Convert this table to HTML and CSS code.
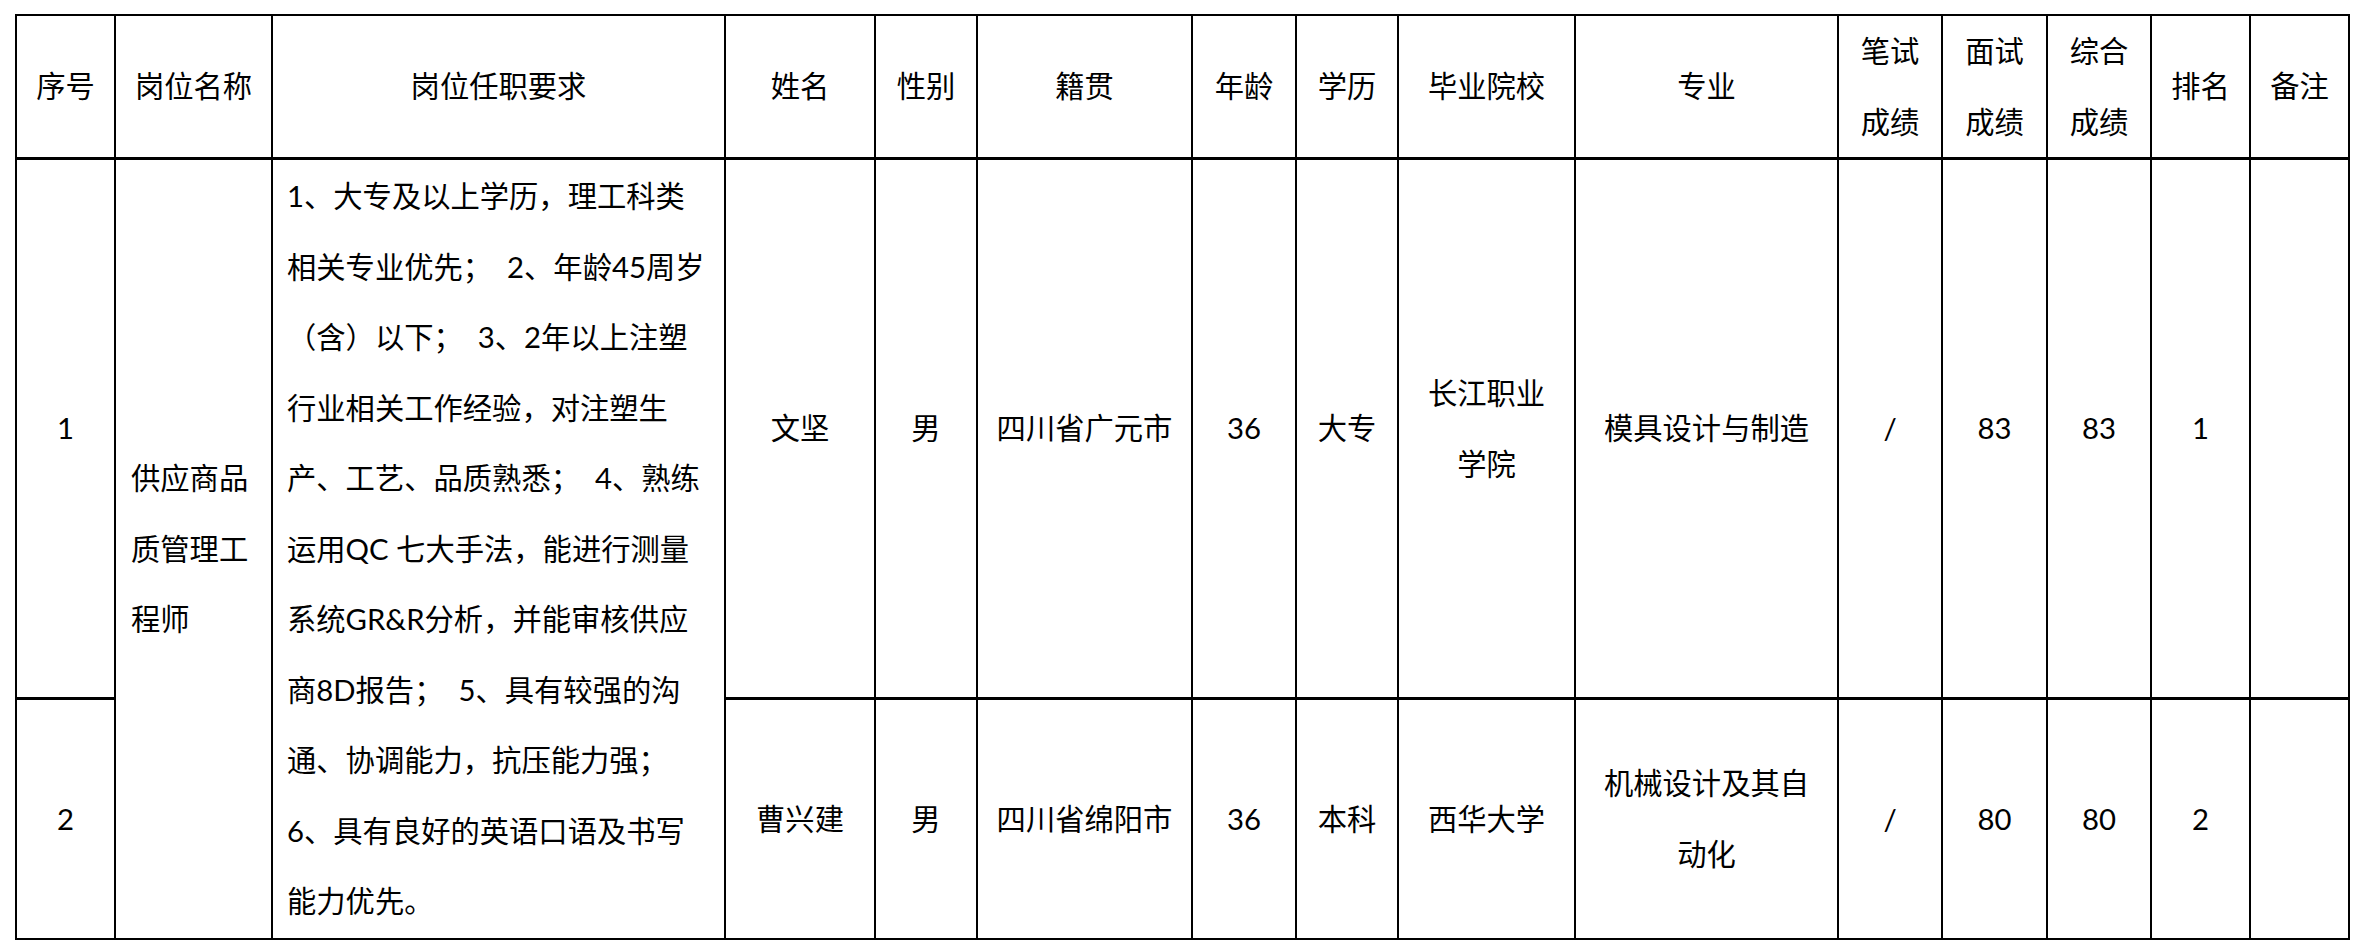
FILE: index.html
```html
<!DOCTYPE html>
<html lang="zh-CN">
<head>
<meta charset="utf-8">
<title>招聘成绩表</title>
<link rel="stylesheet" href="styles.css">
</head>
<body>
<table class="grid">
  <colgroup>
    <col class="c1"><col class="c2"><col class="c3"><col class="c4"><col class="c5">
    <col class="c6"><col class="c7"><col class="c8"><col class="c9"><col class="c10">
    <col class="c11"><col class="c12"><col class="c13"><col class="c14"><col class="c15">
  </colgroup>
  <thead>
    <tr class="head">
      <th>序号</th>
      <th>岗位名称</th>
      <th>岗位任职要求</th>
      <th>姓名</th>
      <th>性别</th>
      <th>籍贯</th>
      <th>年龄</th>
      <th>学历</th>
      <th>毕业院校</th>
      <th>专业</th>
      <th>笔试<br>成绩</th>
      <th>面试<br>成绩</th>
      <th>综合<br>成绩</th>
      <th>排名</th>
      <th>备注</th>
    </tr>
  </thead>
  <tbody>
    <tr class="row1">
      <td>1</td>
      <td rowspan="2" class="left">供应商品<br>质管理工<br>程师</td>
      <td rowspan="2" class="left req">1、大专及以上学历，理工科类<br>相关专业优先；&nbsp; 2、年龄45周岁<br>（含）以下；&nbsp; 3、2年以上注塑<br>行业相关工作经验，对注塑生<br>产、工艺、品质熟悉；&nbsp; 4、熟练<br>运用QC 七大手法，能进行测量<br>系统GR&amp;R分析，并能审核供应<br>商8D报告；&nbsp; 5、具有较强的沟<br>通、协调能力，抗压能力强；<br>6、具有良好的英语口语及书写<br>能力优先。</td>
      <td>文坚</td>
      <td>男</td>
      <td>四川省广元市</td>
      <td>36</td>
      <td>大专</td>
      <td>长江职业<br>学院</td>
      <td>模具设计与制造</td>
      <td>/</td>
      <td>83</td>
      <td>83</td>
      <td>1</td>
      <td></td>
    </tr>
    <tr class="row2">
      <td>2</td>
      <td>曹兴建</td>
      <td>男</td>
      <td>四川省绵阳市</td>
      <td>36</td>
      <td>本科</td>
      <td>西华大学</td>
      <td>机械设计及其自<br>动化</td>
      <td>/</td>
      <td>80</td>
      <td>80</td>
      <td>2</td>
      <td></td>
    </tr>
  </tbody>
</table>
</body>
</html>
```

FILE: styles.css
```css
html, body {
  margin: 0;
  padding: 0;
  background: #ffffff;
}

body {
  padding: 14px 0 0 15px;
  font-family: "Lato", "Noto Sans CJK SC", sans-serif;
  font-size: 29.3px;
  color: #000000;
}

.grid {
  border-collapse: collapse;
  table-layout: fixed;
  width: 2333px;
  border: 2px solid #000;
}

.c1 { width: 99px; }
.c2 { width: 157px; }
.c3 { width: 453px; }
.c4 { width: 150px; }
.c5 { width: 102px; }
.c6 { width: 215px; }
.c7 { width: 104px; }
.c8 { width: 102px; }
.c9 { width: 177px; }
.c10 { width: 263px; }
.c11 { width: 104px; }
.c12 { width: 105px; }
.c13 { width: 104px; }
.c14 { width: 99px; }
.c15 { width: 99px; }

.grid th,
.grid td {
  border-left: 2px solid #000;
  border-right: 2px solid #000;
  padding: 0 6px;
  text-align: center;
  vertical-align: middle;
  font-weight: normal;
  line-height: 70.5px;
  white-space: nowrap;
  overflow: hidden;
}

.head { height: 142px; }
.head th { border-bottom: 3px solid #000; }

.row1 { height: 540px; }
.row1 td { border-bottom: 3px solid #000; }
.row1 td.left { border-bottom: 2px solid #000; }

.row2 { height: 240px; }

.grid td.left {
  text-align: left;
  padding: 0 0 0 15px;
}

.grid td.req {
  padding-left: 14px;
}
```
